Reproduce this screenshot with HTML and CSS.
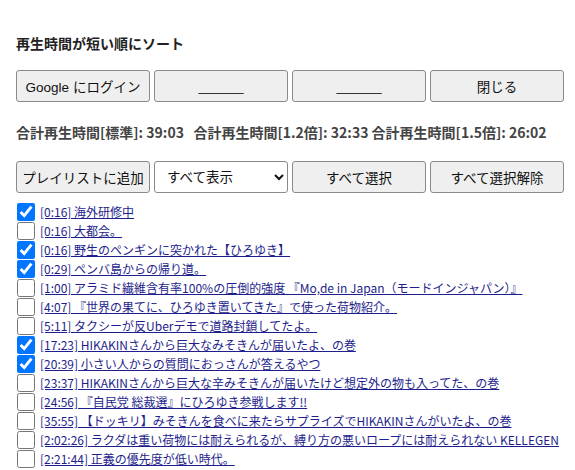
FILE: index.html
```html
<!DOCTYPE html>
<html lang="ja">
<head>
    <meta charset="UTF-8">
    <meta name="viewport" content="width=device-width, initial-scale=1.0">
    <title>再生時間が短い順にソート</title>
    <link rel="stylesheet" href="styles.css">
</head>
<body>
    <h1 class="title">再生時間が短い順にソート</h1>

    <div class="btn-row">
        <button class="btn">Google にログイン</button>
        <button class="btn">______</button>
        <button class="btn">______</button>
        <button class="btn">閉じる</button>
    </div>

    <p class="totals">合計再生時間[標準]: 39:03&nbsp;&nbsp;&nbsp;合計再生時間[1.2倍]: 32:33 合計再生時間[1.5倍]: 26:02</p>

    <div class="btn-row">
        <button class="btn">プレイリストに追加</button>
        <select class="filter">
            <option>すべて表示</option>
            <option>選択済みのみ</option>
            <option>未選択のみ</option>
        </select>
        <button class="btn">すべて選択</button>
        <button class="btn">すべて選択解除</button>
    </div>

    <ul class="video-list">
        <li><input type="checkbox" checked><a href="#">[0:16] 海外研修中</a></li>
        <li><input type="checkbox"><a href="#">[0:16] 大都会。</a></li>
        <li><input type="checkbox" checked><a href="#">[0:16] 野生のペンギンに突かれた【ひろゆき】</a></li>
        <li><input type="checkbox" checked><a href="#">[0:29] ペンバ島からの帰り道。</a></li>
        <li><input type="checkbox"><a href="#">[1:00] アラミド繊維含有率100%の圧倒的強度 『Mo,de in Japan（モードインジャパン）』</a></li>
        <li><input type="checkbox"><a href="#">[4:07] 『世界の果てに、ひろゆき置いてきた』で使った荷物紹介。</a></li>
        <li><input type="checkbox"><a href="#">[5:11] タクシーが反Uberデモで道路封鎖してたよ。</a></li>
        <li><input type="checkbox" checked><a href="#">[17:23] HIKAKINさんから巨大なみそきんが届いたよ、の巻</a></li>
        <li><input type="checkbox" checked><a href="#">[20:39] 小さい人からの質問におっさんが答えるやつ</a></li>
        <li><input type="checkbox"><a href="#">[23:37] HIKAKINさんから巨大な辛みそきんが届いたけど想定外の物も入ってた、の巻</a></li>
        <li><input type="checkbox"><a href="#">[24:56] 『自民党 総裁選』にひろゆき参戦します!!</a></li>
        <li><input type="checkbox"><a href="#">[35:55] 【ドッキリ】みそきんを食べに来たらサプライズでHIKAKINさんがいたよ、の巻</a></li>
        <li><input type="checkbox"><a href="#">[2:02:26] ラクダは重い荷物には耐えられるが、縛り方の悪いロープには耐えられない KELLEGEN</a></li>
        <li><input type="checkbox"><a href="#">[2:21:44] 正義の優先度が低い時代。</a></li>
    </ul>
</body>
</html>
```

FILE: styles.css
```css
body {
    font-family: "Noto Sans CJK JP", "Noto Sans", sans-serif;
    background-color: #fff;
    color: #222;
    margin: 0;
    padding: 32px 12px 0 16px;
}
.title {
    font-size: 14px;
    font-weight: bold;
    margin: 0 0 16px;
    line-height: 22px;
}
.btn-row {
    display: flex;
    gap: 4px;
}
.btn, .filter {
    flex-shrink: 0;
    width: 134px;
    height: 32px;
    font-family: "Liberation Sans", "Noto Sans CJK JP", sans-serif;
    font-size: 13.5px;
    color: #111;
    border: 1px solid #8a8a8a;
    border-radius: 3px;
    padding: 0;
}
.btn {
    background-color: #efefef;
}
.filter {
    background-color: #fff;
    padding-left: 8px;
}
.totals {
    font-size: 14px;
    font-weight: bold;
    color: #444;
    margin: 19px 0 18px;
    line-height: 22px;
    white-space: nowrap;
}
.video-list {
    list-style: none;
    margin: 9px 0 0;
    padding: 0;
}
.video-list li {
    display: flex;
    align-items: center;
    height: 19px;
    white-space: nowrap;
}
.video-list input {
    flex-shrink: 0;
    width: 18px;
    height: 18px;
    margin: 0 5px 0 1px;
    accent-color: #0075ff;
}
.video-list a {
    font-size: 12px;
    color: #1e1e8c;
}
```
